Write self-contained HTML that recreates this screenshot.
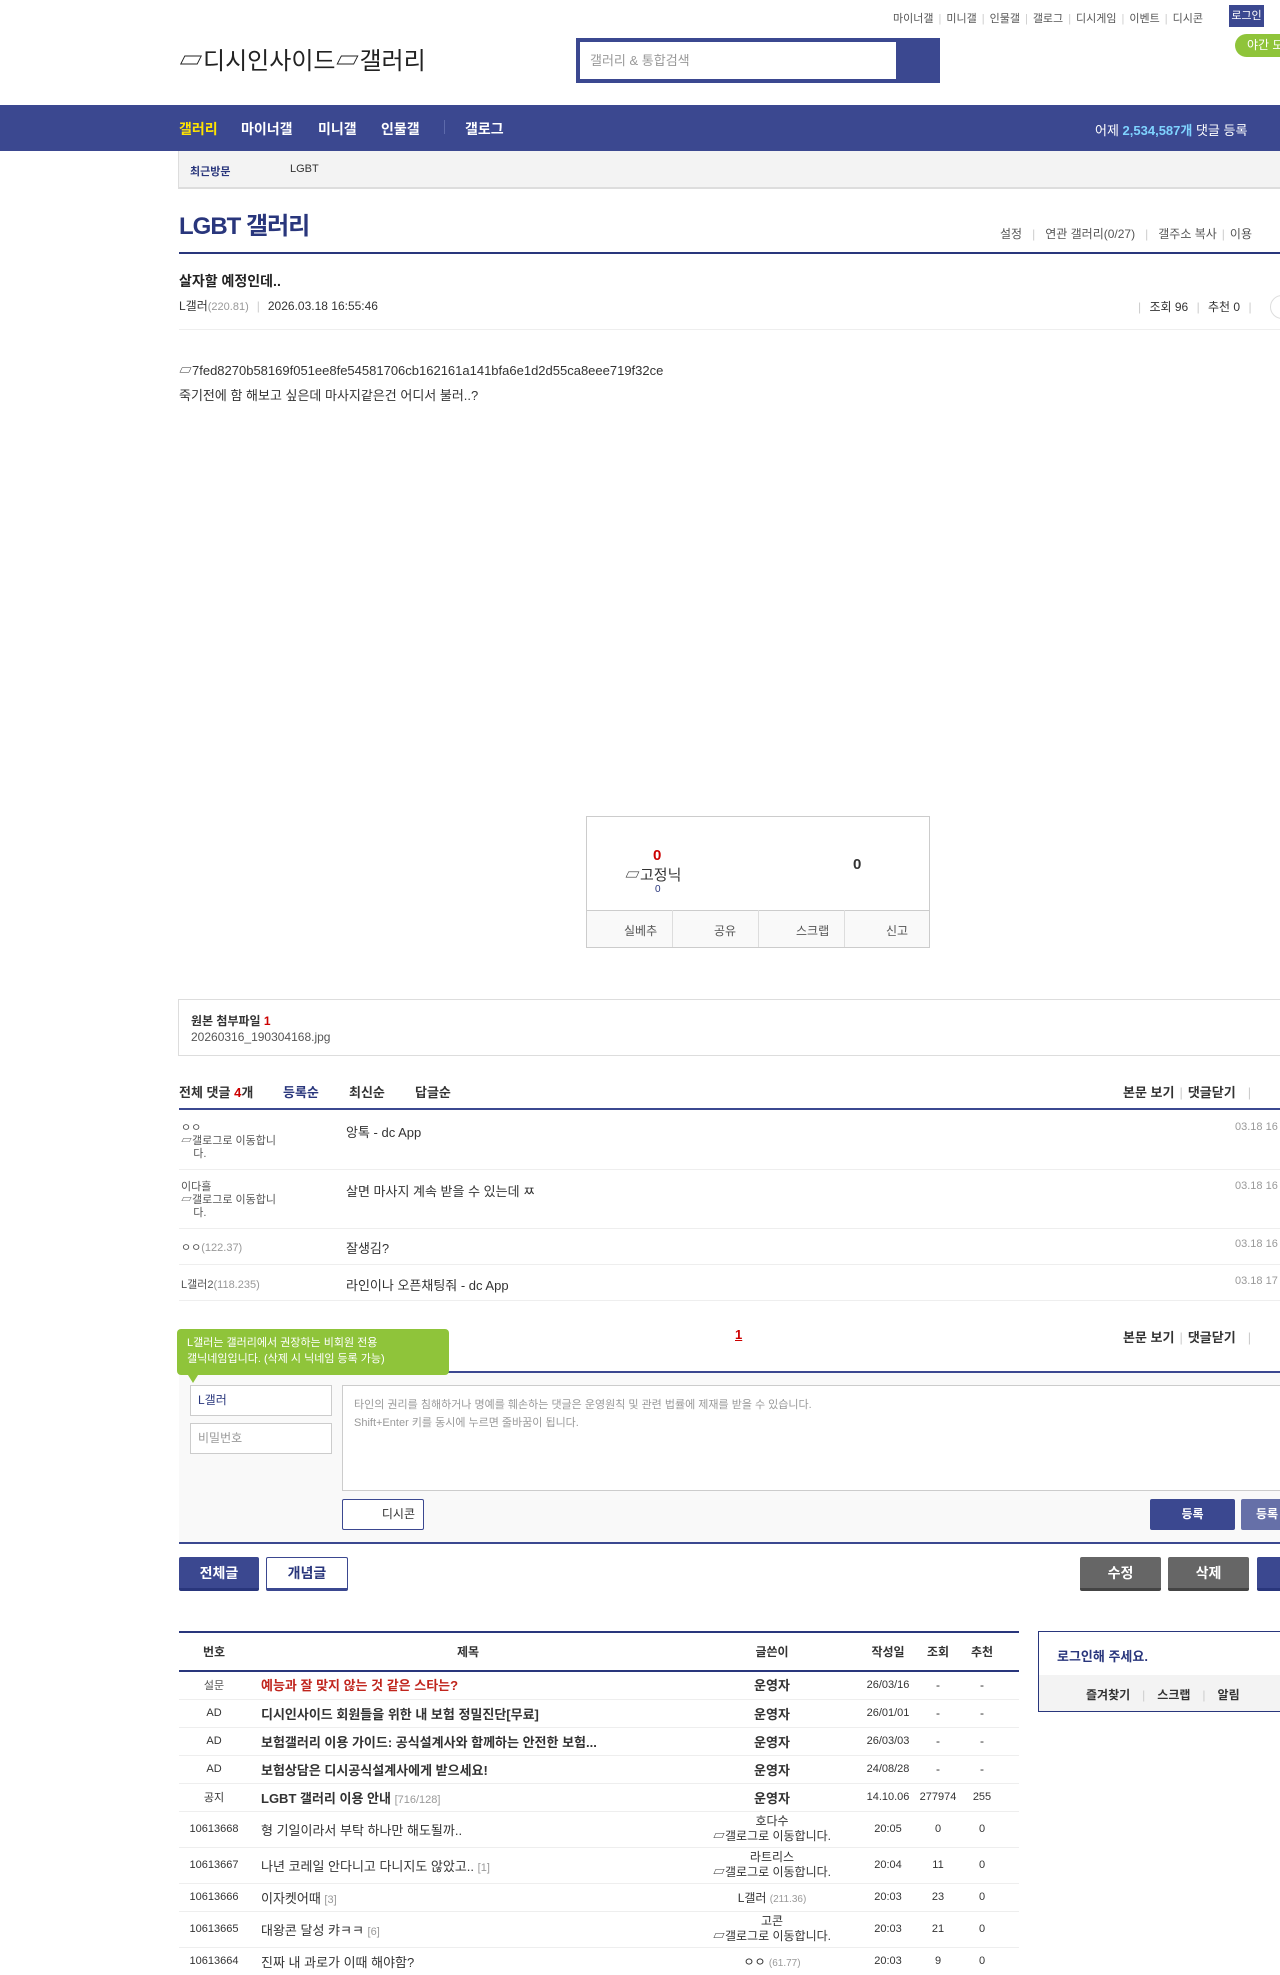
<!DOCTYPE html>
<html><head><meta charset="utf-8">
<style>
*{margin:0;padding:0;box-sizing:border-box}
body{width:1280px;height:1959px;overflow:hidden;position:relative;background:#fff;font-family:"Liberation Sans","Noto Sans CJK KR",sans-serif;color:#333;font-size:13px}
.a{position:absolute;white-space:nowrap}
.nav{background:#3b4890}
.b{font-weight:bold}
.g{color:#999}
.sep{color:#ccc;margin:0 5px}
.btn{position:absolute;border-radius:2px;text-align:center;font-weight:bold;font-size:14px}
.hl{position:absolute;left:179px;right:0;height:1px;background:#eee}
td{white-space:nowrap}
</style></head><body>

<div class="a" style="left:893px;top:10px;font-size:11px;color:#555">마이너갤<span class="sep">|</span>미니갤<span class="sep">|</span>인물갤<span class="sep">|</span>갤로그<span class="sep">|</span>디시게임<span class="sep">|</span>이벤트<span class="sep">|</span>디시콘</div>
<div class="a" style="left:1229px;top:5px;width:35px;height:22px;background:#3b4890;color:#fff;font-size:11px;text-align:center;line-height:22px">로그인</div>
<div class="a" style="left:1235px;top:34px;width:60px;height:23px;background:#8fc43a;color:#fff;border-radius:12px;font-size:12px;line-height:23px;padding-left:12px">야간 모</div>

<div class="a" style="left:179px;top:41px;font-size:24px;color:#222">▱디시인사이드▱갤러리</div>

<div class="a" style="left:576px;top:38px;width:364px;height:45px;background:#3b4890"></div>
<div class="a" style="left:580px;top:42px;width:316px;height:37px;background:#fff;color:#999;font-size:13px;line-height:37px;padding-left:10px">갤러리 &amp; 통합검색</div>

<div class="a nav" style="left:0;top:105px;width:1280px;height:46px"></div>
<div class="a b" style="left:179px;top:119px;font-size:14px;color:#ffe400">갤러리</div>
<div class="a b" style="left:241px;top:119px;font-size:14px;color:#fff">마이너갤</div>
<div class="a b" style="left:318px;top:119px;font-size:14px;color:#fff">미니갤</div>
<div class="a b" style="left:381px;top:119px;font-size:14px;color:#fff">인물갤</div>
<div class="a" style="left:444px;top:120px;width:1px;height:14px;background:#5d6aab"></div>
<div class="a b" style="left:465px;top:119px;font-size:14px;color:#fff">갤로그</div>
<div class="a" style="left:1095px;top:120px;font-size:13px;color:#fff">어제 <b style="color:#7fd3ff">2,534,587개</b> 댓글 등록</div>

<div class="a" style="left:178px;top:151px;width:1110px;height:38px;background:#f3f3f3;border-left:1px solid #ddd;border-bottom:2px solid #ddd"></div>
<div class="a b" style="left:190px;top:163px;font-size:11px;color:#29367c">최근방문</div>
<div class="a" style="left:290px;top:163px;font-size:11px;color:#333">LGBT</div>

<div class="a b" style="left:179px;top:206px;font-size:24px;color:#29367c;letter-spacing:-1px">LGBT 갤러리</div>
<div class="a" style="left:1000px;top:225px;font-size:12px;color:#555">설정<span class="sep" style="margin:0 10px">|</span>연관 갤러리(0/27)<span class="sep" style="margin:0 10px">|</span>갤주소 복사<span class="sep">|</span>이용</div>
<div class="a" style="left:179px;top:252px;width:1110px;height:2px;background:#29367c"></div>

<div class="a b" style="left:179px;top:271px;font-size:14px;color:#222">살자할 예정인데..</div>
<div class="a" style="left:179px;top:297px;font-size:12px;color:#333">L갤러<span class="g" style="font-size:11px">(220.81)</span><span class="sep" style="margin:0 8px">|</span>2026.03.18 16:55:46</div>
<div class="a" style="left:1133px;top:298px;font-size:12px;color:#333"><span class="sep">|</span> 조회 96 <span class="sep">|</span> 추천 0 <span class="sep">|</span></div>
<div class="a" style="left:1270px;top:295px;width:24px;height:24px;border:1px solid #ddd;border-radius:12px"></div>
<div class="a" style="left:179px;top:329px;width:1110px;height:1px;background:#eee"></div>

<div class="a" style="left:179px;top:360px;font-size:13px;color:#333">▱7fed8270b58169f051ee8fe54581706cb162161a141bfa6e1d2d55ca8eee719f32ce</div>
<div class="a" style="left:179px;top:385px;font-size:13px;color:#333">죽기전에 함 해보고 싶은데 마사지같은건 어디서 불러..?</div>

<div class="a" style="left:586px;top:816px;width:344px;height:132px;border:1px solid #ccc"></div>
<div class="a b" style="left:653px;top:847px;font-size:15px;color:#c00">0</div>
<div class="a" style="left:625px;top:864px;font-size:15px;color:#333">▱고정닉</div>
<div class="a" style="left:655px;top:884px;font-size:10px;color:#29367c">0</div>
<div class="a b" style="left:853px;top:856px;font-size:15px;color:#333">0</div>
<div class="a" style="left:587px;top:910px;width:342px;height:37px;background:#f9f9f9;border-top:1px solid #ccc"></div>
<div class="a" style="left:672px;top:910px;width:1px;height:37px;background:#ddd"></div>
<div class="a" style="left:758px;top:910px;width:1px;height:37px;background:#ddd"></div>
<div class="a" style="left:844px;top:910px;width:1px;height:37px;background:#ddd"></div>
<div class="a" style="left:624px;top:922px;font-size:12px;color:#555">실베추</div>
<div class="a" style="left:714px;top:922px;font-size:12px;color:#555">공유</div>
<div class="a" style="left:796px;top:922px;font-size:12px;color:#555">스크랩</div>
<div class="a" style="left:886px;top:922px;font-size:12px;color:#555">신고</div>

<div class="a" style="left:178px;top:999px;width:1110px;height:57px;border:1px solid #ddd"></div>
<div class="a b" style="left:191px;top:1012px;font-size:12px;color:#333">원본 첨부파일 <span style="color:#c00">1</span></div>
<div class="a" style="left:191px;top:1030px;font-size:12px;color:#555">20260316_190304168.jpg</div>

<div class="a b" style="left:179px;top:1082px;font-size:13px;color:#333">전체 댓글 <span style="color:#c00">4</span>개</div>
<div class="a b" style="left:283px;top:1082px;font-size:13px;color:#29367c">등록순</div>
<div class="a b" style="left:349px;top:1082px;font-size:13px;color:#333">최신순</div>
<div class="a b" style="left:415px;top:1082px;font-size:13px;color:#333">답글순</div>
<div class="a b" style="left:1123px;top:1082px;font-size:13px;color:#333">본문 보기<span class="sep" style="font-weight:normal">|</span>댓글닫기<span class="sep" style="font-weight:normal;margin-left:12px">|</span></div>
<div class="a" style="left:179px;top:1108px;width:1110px;height:2px;background:#3b4890"></div>

<div class="a" style="left:181px;top:1122px;font-size:11px;color:#555;line-height:13px">ㅇㅇ<br>▱갤로그로 이동합니<br>&nbsp;&nbsp;&nbsp;&nbsp;다.</div>
<div class="a" style="left:346px;top:1122px;font-size:13px">앙톡 - dc App</div>
<div class="a g" style="left:1235px;top:1121px;font-size:11px">03.18 16</div>
<div class="hl" style="top:1169px"></div>
<div class="a" style="left:181px;top:1181px;font-size:11px;color:#555;line-height:13px">이다흘<br>▱갤로그로 이동합니<br>&nbsp;&nbsp;&nbsp;&nbsp;다.</div>
<div class="a" style="left:346px;top:1181px;font-size:13px">살면 마사지 계속 받을 수 있는데 ㅉ</div>
<div class="a g" style="left:1235px;top:1180px;font-size:11px">03.18 16</div>
<div class="hl" style="top:1228px"></div>
<div class="a" style="left:181px;top:1239px;font-size:11px;color:#555">ㅇㅇ<span class="g">(122.37)</span></div>
<div class="a" style="left:346px;top:1238px;font-size:13px">잘생김?</div>
<div class="a g" style="left:1235px;top:1238px;font-size:11px">03.18 16</div>
<div class="hl" style="top:1264px"></div>
<div class="a" style="left:181px;top:1276px;font-size:11px;color:#555">L갤러2<span class="g">(118.235)</span></div>
<div class="a" style="left:346px;top:1275px;font-size:13px">라인이나 오픈채팅줘 - dc App</div>
<div class="a g" style="left:1235px;top:1275px;font-size:11px">03.18 17</div>
<div class="hl" style="top:1300px"></div>

<div class="a b" style="left:735px;top:1327px;font-size:13px;color:#c00;text-decoration:underline">1</div>
<div class="a b" style="left:1123px;top:1327px;font-size:13px;color:#333">본문 보기<span class="sep" style="font-weight:normal">|</span>댓글닫기<span class="sep" style="font-weight:normal;margin-left:12px">|</span></div>

<div class="a" style="left:179px;top:1371px;width:1110px;height:173px;background:#f9f9f9;border-top:2px solid #3b4890;border-bottom:2px solid #3b4890"></div>
<div class="a" style="left:177px;top:1329px;width:272px;height:46px;background:#8fc43a;border-radius:4px;color:#fff;font-size:11px;line-height:16px;padding:6px 10px">L갤러는 갤러리에서 권장하는 비회원 전용<br>갤닉네임입니다. (삭제 시 닉네임 등록 가능)</div>
<div class="a" style="left:188px;top:1375px;width:0;height:0;border-left:5px solid transparent;border-right:5px solid transparent;border-top:8px solid #8fc43a"></div>
<div class="a" style="left:190px;top:1385px;width:142px;height:31px;background:#fff;border:1px solid #ccc;font-size:12px;color:#29367c;line-height:29px;padding-left:7px">L갤러</div>
<div class="a" style="left:190px;top:1423px;width:142px;height:31px;background:#fff;border:1px solid #ccc;font-size:12px;color:#999;line-height:29px;padding-left:7px">비밀번호</div>
<div class="a" style="left:342px;top:1385px;width:950px;height:106px;background:#fff;border:1px solid #ccc;font-size:11px;color:#999;line-height:18px;padding:10px 11px">타인의 권리를 침해하거나 명예를 훼손하는 댓글은 운영원칙 및 관련 법률에 제재를 받을 수 있습니다.<br>Shift+Enter 키를 동시에 누르면 줄바꿈이 됩니다.</div>
<div class="a" style="left:342px;top:1499px;width:82px;height:31px;background:#fff;border:1px solid #3b4890;border-radius:2px;font-size:12px;color:#333;line-height:29px;text-align:right;padding-right:8px">디시콘</div>
<div class="btn" style="left:1150px;top:1499px;width:85px;height:31px;background:#3b4890;color:#fff;font-size:12px;line-height:31px">등록</div>
<div class="btn" style="left:1241px;top:1499px;width:60px;height:31px;background:#6670a8;color:#fff;font-size:12px;line-height:31px;text-align:left;padding-left:15px">등록</div>

<div class="btn" style="left:179px;top:1557px;width:80px;height:34px;background:#3b4890;color:#fff;line-height:32px;border-bottom:3px solid #29367c">전체글</div>
<div class="btn" style="left:266px;top:1557px;width:82px;height:34px;background:#fff;color:#29367c;border:1px solid #3b4890;border-bottom:3px solid #3b4890;line-height:30px">개념글</div>
<div class="btn" style="left:1080px;top:1557px;width:81px;height:34px;background:#666;color:#fff;line-height:32px;border-bottom:3px solid #444">수정</div>
<div class="btn" style="left:1168px;top:1557px;width:81px;height:34px;background:#666;color:#fff;line-height:32px;border-bottom:3px solid #444">삭제</div>
<div class="btn" style="left:1257px;top:1557px;width:40px;height:34px;background:#3b4890;color:#fff;line-height:32px;border-bottom:3px solid #29367c"></div>

<div class="a" style="left:179px;top:1631px;width:840px;height:2px;background:#29367c"></div>
<table class="a" style="left:179px;top:1633px;width:840px;border-collapse:collapse;font-size:12px">
<tr style="height:38px;border-bottom:2px solid #29367c;font-weight:bold;color:#333"><td style="width:70px;text-align:center">번호</td><td style="text-align:center">제목</td><td style="width:170px;text-align:center">글쓴이</td><td style="width:62px;text-align:center">작성일</td><td style="width:38px;text-align:center">조회</td><td style="width:62px;text-align:center;padding-right:12px">추천</td></tr>
</table>
<div class="a" style="left:179px;top:1671px;width:840px">
<table style="width:840px;border-collapse:collapse;font-size:12px;color:#333">
<colgroup><col style="width:70px"><col><col style="width:170px"><col style="width:62px"><col style="width:38px"><col style="width:62px"></colgroup>
<tr style="height:28px;border-bottom:1px solid #eee"><td style="text-align:center;font-size:11px;color:#555">설문</td><td class="b" style="color:#c0251d;font-size:13px;padding-left:12px">예능과 잘 맞지 않는 것 같은 스타는?</td><td class="b" style="text-align:center;font-size:13px">운영자</td><td style="text-align:center;font-size:11px">26/03/16</td><td style="text-align:center">-</td><td style="text-align:center;padding-right:12px">-</td></tr>
<tr style="height:28px;border-bottom:1px solid #eee"><td style="text-align:center;font-size:11px">AD</td><td class="b" style="font-size:13px;padding-left:12px">디시인사이드 회원들을 위한 내 보험 정밀진단[무료]</td><td class="b" style="text-align:center;font-size:13px">운영자</td><td style="text-align:center;font-size:11px">26/01/01</td><td style="text-align:center">-</td><td style="text-align:center;padding-right:12px">-</td></tr>
<tr style="height:28px;border-bottom:1px solid #eee"><td style="text-align:center;font-size:11px">AD</td><td class="b" style="font-size:13px;padding-left:12px">보험갤러리 이용 가이드: 공식설계사와 함께하는 안전한 보험...</td><td class="b" style="text-align:center;font-size:13px">운영자</td><td style="text-align:center;font-size:11px">26/03/03</td><td style="text-align:center">-</td><td style="text-align:center;padding-right:12px">-</td></tr>
<tr style="height:28px;border-bottom:1px solid #eee"><td style="text-align:center;font-size:11px">AD</td><td class="b" style="font-size:13px;padding-left:12px">보험상담은 디시공식설계사에게 받으세요!</td><td class="b" style="text-align:center;font-size:13px">운영자</td><td style="text-align:center;font-size:11px">24/08/28</td><td style="text-align:center">-</td><td style="text-align:center;padding-right:12px">-</td></tr>
<tr style="height:28px;border-bottom:1px solid #eee"><td style="text-align:center;font-size:11px">공지</td><td style="font-size:13px;padding-left:12px"><b>LGBT 갤러리 이용 안내</b> <span class="g" style="font-size:11px">[716/128]</span></td><td class="b" style="text-align:center;font-size:13px">운영자</td><td style="text-align:center;font-size:11px">14.10.06</td><td style="text-align:center;font-size:11px">277974</td><td style="text-align:center;font-size:11px;padding-right:12px">255</td></tr>
<tr style="height:36px;border-bottom:1px solid #eee"><td style="text-align:center;font-size:11px">10613668</td><td style="font-size:13px;padding-left:12px">형 기일이라서 부탁 하나만 해도될까..</td><td style="text-align:center;font-size:12px;line-height:15px">호다수<br>▱갤로그로 이동합니다.</td><td style="text-align:center;font-size:11px">20:05</td><td style="text-align:center;font-size:11px">0</td><td style="text-align:center;font-size:11px;padding-right:12px">0</td></tr>
<tr style="height:36px;border-bottom:1px solid #eee"><td style="text-align:center;font-size:11px">10613667</td><td style="font-size:13px;padding-left:12px">나년 코레일 안다니고 다니지도 않았고.. <span class="g" style="font-size:11px">[1]</span></td><td style="text-align:center;font-size:12px;line-height:15px">라트리스<br>▱갤로그로 이동합니다.</td><td style="text-align:center;font-size:11px">20:04</td><td style="text-align:center;font-size:11px">11</td><td style="text-align:center;font-size:11px;padding-right:12px">0</td></tr>
<tr style="height:28px;border-bottom:1px solid #eee"><td style="text-align:center;font-size:11px">10613666</td><td style="font-size:13px;padding-left:12px">이자켓어때 <span class="g" style="font-size:11px">[3]</span></td><td style="text-align:center;font-size:12px">L갤러 <span class="g" style="font-size:10px">(211.36)</span></td><td style="text-align:center;font-size:11px">20:03</td><td style="text-align:center;font-size:11px">23</td><td style="text-align:center;font-size:11px;padding-right:12px">0</td></tr>
<tr style="height:36px;border-bottom:1px solid #eee"><td style="text-align:center;font-size:11px">10613665</td><td style="font-size:13px;padding-left:12px">대왕콘 달성 캬ㅋㅋ <span class="g" style="font-size:11px">[6]</span></td><td style="text-align:center;font-size:12px;line-height:15px">고콘<br>▱갤로그로 이동합니다.</td><td style="text-align:center;font-size:11px">20:03</td><td style="text-align:center;font-size:11px">21</td><td style="text-align:center;font-size:11px;padding-right:12px">0</td></tr>
<tr style="height:28px"><td style="text-align:center;font-size:11px">10613664</td><td style="font-size:13px;padding-left:12px">진짜 내 과로가 이때 해야함?</td><td style="text-align:center;font-size:12px">ㅇㅇ <span class="g" style="font-size:10px">(61.77)</span></td><td style="text-align:center;font-size:11px">20:03</td><td style="text-align:center;font-size:11px">9</td><td style="text-align:center;font-size:11px;padding-right:12px">0</td></tr>
</table></div>

<div class="a" style="left:1038px;top:1631px;width:260px;height:81px;border:1px solid #29367c;border-right:none"></div>
<div class="a b" style="left:1057px;top:1646px;font-size:13px;color:#29367c">로그인해 주세요.</div>
<div class="a" style="left:1039px;top:1675px;width:250px;height:36px;background:#f3f3f3"></div>
<div class="a b" style="left:1086px;top:1686px;font-size:12px;color:#333">즐겨찾기<span class="sep" style="font-weight:normal;margin:0 12px">|</span>스크랩<span class="sep" style="font-weight:normal;margin:0 12px">|</span>알림</div>

</body></html>
